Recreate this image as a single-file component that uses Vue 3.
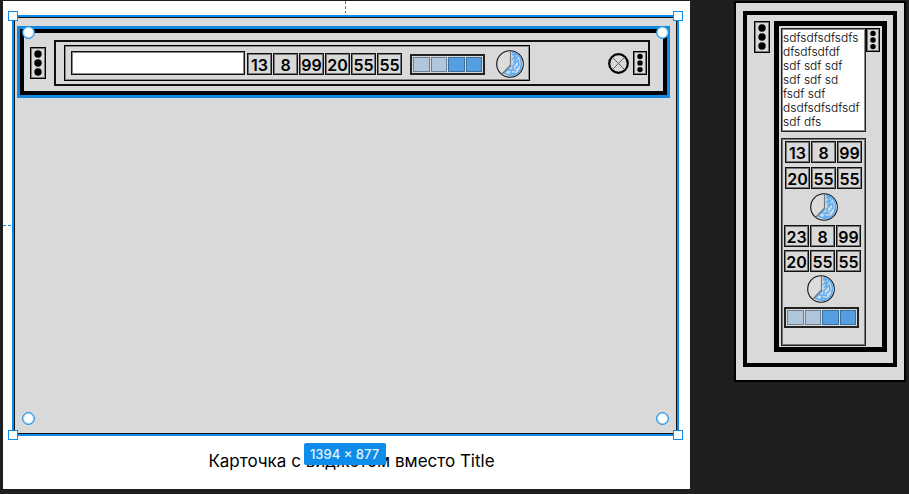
<script setup>
const barNumbers = [13, 8, 99, 20, 55, 55]
const groups = [
  { id: 'a', rows: [[13, 8, 99], [20, 55, 55]] },
  { id: 'b', rows: [[23, 8, 99], [20, 55, 55]] },
]
const cells = [false, false, true, true]
const corners = ['tl', 'tr', 'bl', 'br']
const noteLines = ['sdfsdfsdfsdfs', 'dfsdfsdfdf', 'sdf sdf sdf', 'sdf sdf sd', 'fsdf sdf', 'dsdfsdfsdfsdf', 'sdf dfs']
</script>

<template>
  <main class="canvas">
    <svg class="defs" aria-hidden="true">
      <symbol id="pie" viewBox="0 0 28 28">
        <circle cx="14" cy="14" r="13.3" fill="#dcdcdc" stroke="#111" stroke-width="1.1" />
        <path d="M15.500 2.500A11.500 11.500 0 1 1 7.500 22.500L15.500 15Z" fill="#c9dcee" />
        <path d="M16 2.500Q25.500 4 25.500 14Q25 25 14 25.500L8 23L15.500 15.500" fill="none" stroke="#5aa9ee" stroke-width="1.600" />
        <path d="M16 5l4-1-3 5 4-2-3 5 3-1-4 5M22 9l1 6-4 4M12 20l4 0-2 4 5-1M17 15v5l3 1" fill="none" stroke="#62acec" stroke-width="1.500" />
        <path d="M14.500 1v14L6 24" fill="none" stroke="#777" stroke-width="1.200" />
      </symbol>
      <symbol id="dots" viewBox="0 0 14 30">
        <circle cx="7" cy="6" r="3.700" />
        <circle cx="7" cy="15" r="3.700" />
        <circle cx="7" cy="24" r="3.700" />
      </symbol>
    </svg>

    <section class="board">
      <span class="guide guide-top"></span>
      <span class="guide guide-left"></span>
      <article class="card">
        <div class="widget">
          <div class="frame">
            <button class="dots large" type="button" aria-label="Menu"><svg><use href="#dots" /></svg></button>
            <div class="bar">
              <div class="group">
                <input class="field" type="text" aria-label="Title" />
                <div class="numbers">
                  <span v-for="(n, i) in barNumbers" :key="i" class="number">{{ n }}</span>
                </div>
                <div class="strip">
                  <i v-for="(on, i) in cells" :key="i" class="cell" :class="{ on }"></i>
                </div>
                <svg class="pie"><use href="#pie" /></svg>
              </div>
              <div class="actions">
                <button class="close" type="button" aria-label="Close">
                  <svg viewBox="0 0 21 21">
                    <circle cx="10.500" cy="10.500" r="9.300" fill="none" stroke="#000" stroke-width="2.200" />
                    <path d="M4.500 4.500l12 12M16.500 4.500l-12 12" stroke="#555" stroke-width="0.900" />
                  </svg>
                </button>
                <button class="dots small" type="button" aria-label="Menu"><svg><use href="#dots" /></svg></button>
              </div>
            </div>
          </div>
        </div>
        <span v-for="c in corners" :key="c" class="handle" :class="c"></span>
        <span v-for="c in corners" :key="'r' + c" class="radius" :class="c"></span>
        <span class="size">1394 × 877</span>
      </article>
      <p class="caption">Карточка с виджетом вместо Title</p>
    </section>

    <aside class="panel">
      <div class="panel-mid">
        <button class="dots large" type="button" aria-label="Menu"><svg><use href="#dots" /></svg></button>
        <div class="panel-in">
          <div class="column">
            <div class="note">
              <div v-for="line in noteLines" :key="line">{{ line }}</div>
            </div>
            <div class="stack">
              <div v-for="g in groups" :key="g.id" class="set" :class="g.id">
                <div v-for="(row, i) in g.rows" :key="i" class="numbers">
                  <span v-for="(n, j) in row" :key="j" class="number">{{ n }}</span>
                </div>
                <svg class="pie"><use href="#pie" /></svg>
              </div>
              <div class="strip">
                <i v-for="(on, i) in cells" :key="i" class="cell" :class="{ on }"></i>
              </div>
            </div>
          </div>
          <button class="dots small" type="button" aria-label="Menu"><svg><use href="#dots" /></svg></button>
        </div>
      </div>
    </aside>
  </main>
</template>

<style>
body {
  background: #1e1e1e;
}
</style>

<style scoped>
* {
  box-sizing: border-box;
}
.canvas {
  display: flex;
  align-items: flex-start;
  gap: 44px;
  min-height: 100vh;
  padding: 1px 3px 5px;
  background: #1e1e1e;
  color: #000;
  font-family: Inter, "Liberation Sans", sans-serif;
}
.defs {
  position: absolute;
  width: 0;
  height: 0;
}
.board {
  position: relative;
  flex: 1;
  align-self: stretch;
  display: flex;
  flex-direction: column;
  padding: 14px 11px 0 9px;
  background: #fff;
}
.guide {
  position: absolute;
}
.guide-top {
  top: 0;
  left: 342px;
  width: 1px;
  height: 12px;
  background: repeating-linear-gradient(to bottom, #0d8ce9 0 3px, #fff 3px 5px);
}
.guide-left {
  top: 224px;
  left: 0;
  width: 9px;
  height: 1px;
  background: repeating-linear-gradient(to right, #0d8ce9 0 3px, #fff 3px 5px);
}
.card {
  position: relative;
  flex: 1;
  padding: 9px 7px 9px 3px;
  border: 2px solid #0d8ce9;
  background: #d9d9d9;
  box-shadow: inset 0 0 0 1px #111;
}
.widget {
  border: 3px solid #1488e0;
}
.frame {
  display: flex;
  align-items: center;
  gap: 8px;
  padding: 7px 13px 5px 6px;
  border: 4px solid #000;
}
.bar {
  flex: 1;
  display: flex;
  justify-content: space-between;
  align-items: center;
  padding: 3px 1px 3px 8px;
  border: 2px solid #111;
}
.group {
  display: flex;
  align-items: center;
  height: 36px;
  padding: 2px 5px 0 6px;
  border: 1px solid #000;
  box-shadow: inset 0 0 0 1px #888;
}
.field {
  width: 174px;
  height: 24px;
  margin: 0 2px 2px 0;
  padding: 0 4px;
  border: 1px solid #111;
  border-radius: 0;
  background: #fff;
  box-shadow: inset 0 0 0 1px #888;
  font: 14px Inter, sans-serif;
}
.numbers {
  display: flex;
  gap: 1px;
}
.number {
  width: 25px;
  height: 22px;
  border: 1px solid #111;
  box-shadow: inset 0 0 0 1px #777;
  font-size: 16px;
  font-weight: 600;
  line-height: 22px;
  text-align: center;
}
.strip {
  display: grid;
  grid-template-columns: repeat(4, 1fr);
  gap: 1px;
  width: 75px;
  height: 21px;
  padding: 1px;
  border: 2px solid #222;
}
.group .strip {
  margin: 0 11px 0 8px;
}
.cell {
  border: 1px solid #71808e;
  background: #b0c6dc;
}
.cell.on {
  border-color: #3d6f9c;
  background: #559fe0;
}
.pie {
  display: block;
  width: 28px;
  height: 28px;
}
.actions {
  display: flex;
  align-items: center;
  gap: 4px;
}
button {
  display: flex;
  justify-content: center;
  align-items: center;
  padding: 0;
  border: 0;
  background: none;
}
.close svg {
  width: 21px;
  height: 21px;
}
.dots {
  flex: none;
  border: 1px solid #000;
  box-shadow: inset 0 0 0 1px #777;
}
.dots.large {
  width: 16px;
  height: 32px;
}
.dots.large svg {
  width: 14px;
  height: 30px;
}
.dots.small {
  width: 14px;
  height: 24px;
}
.dots.small svg {
  width: 12px;
  height: 22px;
}
.handle,
.radius {
  position: absolute;
  background: #fff;
}
.handle {
  width: 10px;
  height: 10px;
  border: 1px solid #0d8ce9;
}
.handle.tl,
.handle.tr {
  top: -6px;
}
.handle.bl,
.handle.br {
  bottom: -6px;
}
.handle.tl,
.handle.bl {
  left: -6px;
}
.handle.tr,
.handle.br {
  right: -6px;
}
.radius {
  width: 13px;
  height: 13px;
  border: 1px solid #0d8ce9;
  border-radius: 50%;
  box-shadow: inset 0 0 0 1px #9fd0f6;
}
.radius.tl,
.radius.tr {
  top: 9px;
}
.radius.bl,
.radius.br {
  bottom: 9px;
}
.radius.tl,
.radius.bl {
  left: 8px;
}
.radius.tr,
.radius.br {
  right: 8px;
}
.size {
  position: absolute;
  z-index: 1;
  top: 100%;
  left: 50%;
  width: 82px;
  margin: 9px 0 0 -42px;
  border-radius: 2px;
  background: #0d8ce9;
  color: #e3f2fd;
  font-size: 13px;
  font-weight: 500;
  line-height: 22px;
  text-align: center;
  white-space: nowrap;
}
.caption {
  margin: 0;
  padding: 13px 0 16px 12px;
  font-size: 17px;
  line-height: 24px;
  text-align: center;
}
.panel {
  flex: none;
  width: 172px;
  padding: 8px 7px 13px;
  border: 2px solid #000;
  background: #d9d9d9;
}
.panel-mid {
  display: flex;
  align-items: flex-start;
  gap: 4px;
  padding: 6px 6px 11px 7px;
  border: 4px solid #000;
}
.panel-in {
  flex: 1;
  display: flex;
  align-items: flex-start;
  padding: 2px 2px 1px;
  border: 5px solid #000;
}
.column {
  flex: none;
  display: flex;
  flex-direction: column;
  gap: 6px;
  width: 85px;
}
.note {
  padding: 2px 1px;
  border: 1px solid #222;
  background: #fff;
  box-shadow: inset 0 0 0 1px #888;
  font-size: 12px;
  font-weight: 300;
  line-height: 14px;
  white-space: nowrap;
}
.stack {
  display: flex;
  flex-direction: column;
  gap: 4px;
  padding: 2px 0 17px 2px;
  border: 1px solid #222;
  box-shadow: inset 0 0 0 1px #777;
}
.set {
  display: flex;
  flex-direction: column;
  align-items: center;
}
.set.a {
  gap: 4px;
  width: 79px;
}
.set.b {
  gap: 3px;
  width: 77px;
}
.set.b .pie {
  margin-right: 4px;
}
</style>
